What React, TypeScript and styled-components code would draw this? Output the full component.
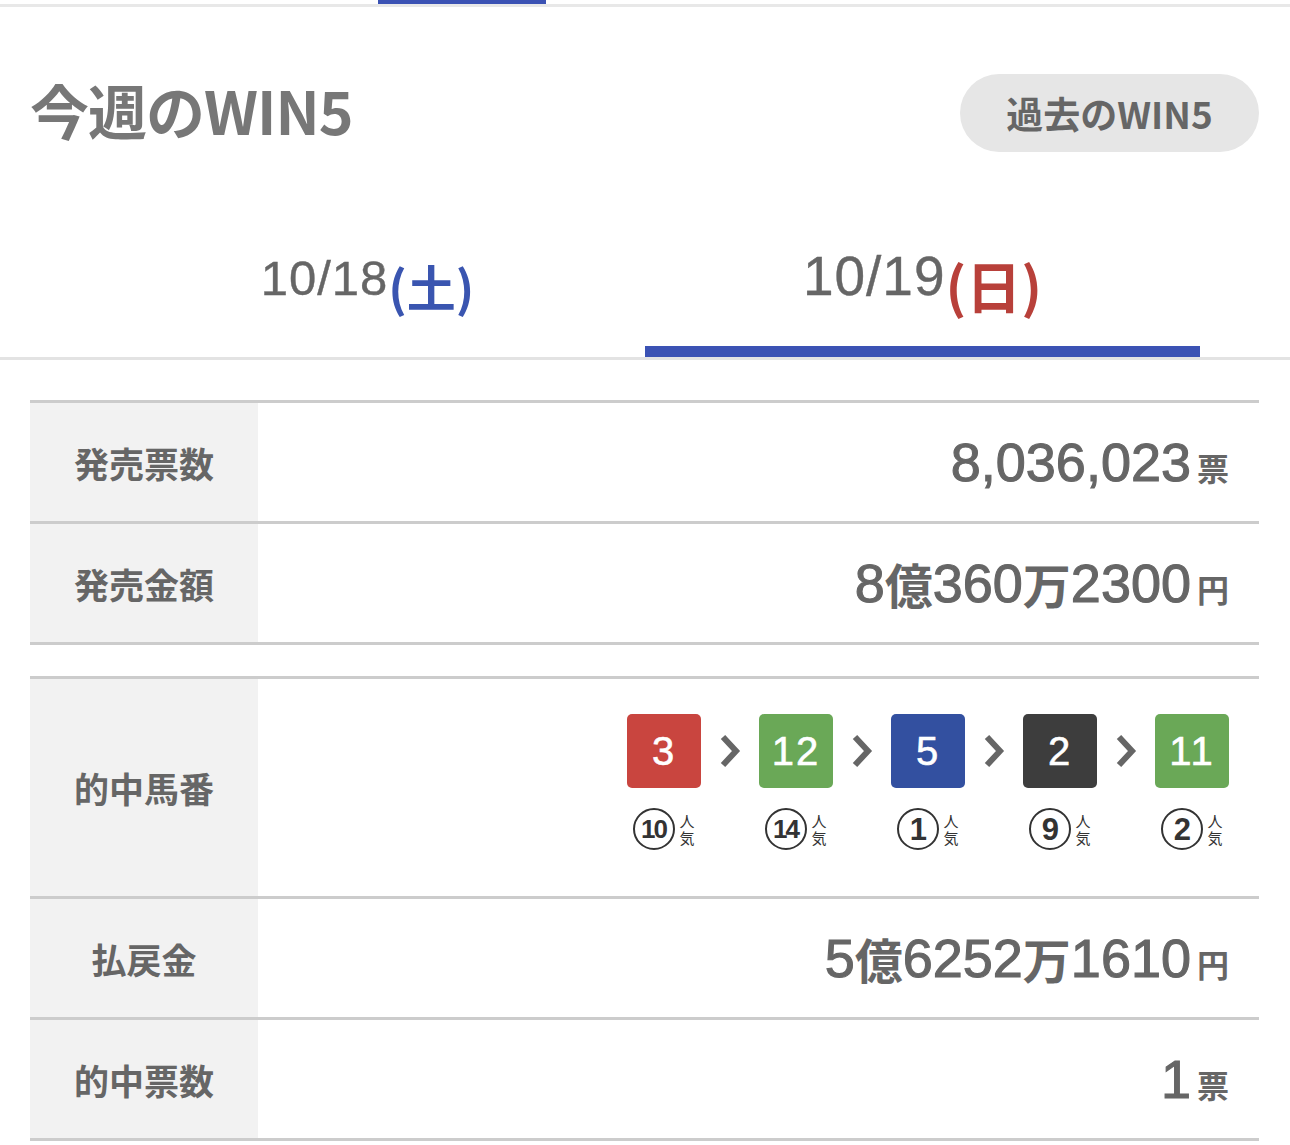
import React from "react"
import styled, { createGlobalStyle } from "styled-components"

const GlobalStyle = createGlobalStyle`
  html, body {
    margin: 0;
    padding: 0;
    background: #fff;
  }
  body {
    font-family: "Liberation Sans", "Noto Sans CJK JP", sans-serif;
    color: #666;
  }
`

const TopNav = styled.div`
  height: 4px;
  padding-left: 378px;
  border-bottom: 3px solid #e8e8e8;
`

const TopIndicator = styled.div`
  width: 168px;
  height: 4px;
  background: #3b52b4;
`

const Header = styled.header`
  display: flex;
  align-items: center;
  justify-content: space-between;
  margin-top: 67px;
  padding: 0 31px 0 30px;
`

const Title = styled.h1`
  margin: 0 0 6px;
  line-height: 72px;
  font-family: "Noto Sans CJK JP", sans-serif;
  font-size: 59px;
  font-weight: 700;
  color: #777;
  letter-spacing: -1px;
`

const PastButton = styled.button`
  width: 299px;
  height: 78px;
  border: none;
  border-radius: 39px;
  background: #e6e6e6;
  color: #666;
  font-family: "Noto Sans CJK JP", sans-serif;
  font-size: 37px;
  font-weight: 700;
  cursor: pointer;
`

const Tabs = styled.nav`
  display: flex;
  padding: 0 90px;
  margin-top: 90px;
  border-bottom: 3px solid #e3e3e3;
`

const Tab = styled.div<{ active?: boolean }>`
  flex: 1;
  height: 115px;
  display: flex;
  align-items: flex-start;
  justify-content: center;
  box-sizing: border-box;
  padding-top: ${p => (p.active ? "2px" : "8px")};
  border-bottom: 11px solid ${p => (p.active ? "#3b52b4" : "transparent")};
  font-size: ${p => (p.active ? "55px" : "49px")};
  letter-spacing: 1px;
  color: #666;
  -webkit-text-stroke: 0.4px #666;
`

const Day = styled.span<{ tone: "sat" | "sun" }>`
  font-family: "Noto Sans CJK JP", sans-serif;
  font-weight: 700;
  letter-spacing: 0;
  -webkit-text-stroke: 0;
  color: ${p => (p.tone === "sat" ? "#3a55b0" : "#b8403a")};
`

const Table = styled.section<{ gap: number }>`
  margin: ${p => p.gap}px 31px 0 30px;
  border-top: 3px solid #cccccc;
`

const Row = styled.div<{ tall?: boolean }>`
  display: grid;
  grid-template-columns: 228px 1fr;
  height: ${p => (p.tall ? "217px" : "118px")};
  border-bottom: 3px solid #cccccc;
`

const Label = styled.div`
  display: flex;
  align-items: center;
  justify-content: center;
  background: #f2f2f2;
  font-family: "Noto Sans CJK JP", sans-serif;
  font-size: 35px;
  font-weight: 700;
  color: #666;
`

const Value = styled.div`
  display: flex;
  align-items: center;
  justify-content: flex-end;
  padding-right: 30px;
  font-size: 54px;
  font-weight: 400;
  color: #666;
  -webkit-text-stroke: 1.1px #666;
`

const Unit = styled.span`
  font-family: "Noto Sans CJK JP", sans-serif;
  font-size: 32px;
  font-weight: 700;
  -webkit-text-stroke: 0;
  margin-left: 6px;
  margin-top: 10px;
`

const Kanji = styled.span`
  font-family: "Noto Sans CJK JP", sans-serif;
  font-size: 48px;
  font-weight: 700;
  -webkit-text-stroke: 0;
`

const Horses = styled.div`
  display: flex;
  align-items: flex-start;
  justify-content: flex-end;
  padding: 35px 30px 0 0;
`

const HorseItem = styled.div`
  display: flex;
  flex-direction: column;
  align-items: center;
  width: 74px;
`

const HorseBox = styled.div<{ bg: string }>`
  width: 74px;
  height: 74px;
  border-radius: 5px;
  background: ${p => p.bg};
  color: #fff;
  display: flex;
  align-items: center;
  justify-content: center;
  font-size: 40px;
  font-family: "Liberation Sans", sans-serif;
  letter-spacing: 2px;
  -webkit-text-stroke: 0.6px #fff;
`

const Chevron = styled.div`
  width: 58px;
  height: 74px;
  display: flex;
  align-items: center;
  justify-content: center;
`

const Popularity = styled.div`
  display: flex;
  align-items: center;
  margin-top: 20px;
  color: #333;
`

const Circled = styled.span<{ wide?: boolean }>`
  width: 38px;
  height: 38px;
  border: 2.5px solid #333;
  border-radius: 50%;
  display: flex;
  align-items: center;
  justify-content: center;
  font-family: "Liberation Sans Narrow", "Liberation Sans", sans-serif;
  font-weight: 700;
  font-size: ${p => (p.wide ? "26px" : "31px")};
  letter-spacing: ${p => (p.wide ? "-2px" : "0")};
  text-indent: ${p => (p.wide ? "-2px" : "0")};
  line-height: 1;
`

const Ninki = styled.span`
  display: flex;
  flex-direction: column;
  font-family: "Noto Sans CJK JP", sans-serif;
  font-size: 15px;
  line-height: 17px;
  margin-left: 4px;
`

const horses = [
  { no: 3, color: "#c9453f", pop: 10 },
  { no: 12, color: "#6aa857", pop: 14 },
  { no: 5, color: "#3350a0", pop: 1 },
  { no: 2, color: "#3d3d3d", pop: 9 },
  { no: 11, color: "#6aa857", pop: 2 },
]

const Arrow = () => (
  <Chevron>
    <svg width="22" height="34" viewBox="0 0 22 34">
      <polyline points="4,3 17,17 4,31" fill="none" stroke="#666" strokeWidth="6" strokeLinejoin="miter" />
    </svg>
  </Chevron>
)

export default function App() {
  return (
    <>
      <GlobalStyle />
      <TopNav>
        <TopIndicator />
      </TopNav>
      <Header>
        <Title>今週のWIN5</Title>
        <PastButton>過去のWIN5</PastButton>
      </Header>
      <Tabs>
        <Tab>
          10/18<Day tone="sat">(土)</Day>
        </Tab>
        <Tab active>
          10/19<Day tone="sun">(日)</Day>
        </Tab>
      </Tabs>

      <Table gap={40}>
        <Row>
          <Label>発売票数</Label>
          <Value>
            8,036,023<Unit>票</Unit>
          </Value>
        </Row>
        <Row>
          <Label>発売金額</Label>
          <Value>
            8<Kanji>億</Kanji>360<Kanji>万</Kanji>2300<Unit>円</Unit>
          </Value>
        </Row>
      </Table>

      <Table gap={31}>
        <Row tall>
          <Label>的中馬番</Label>
          <Horses>
            {horses.map((h, i) => (
              <React.Fragment key={h.no}>
                {i > 0 && <Arrow />}
                <HorseItem>
                  <HorseBox bg={h.color}>{h.no}</HorseBox>
                  <Popularity>
                    <Circled wide={h.pop >= 10}>{h.pop}</Circled>
                    <Ninki>
                      <span>人</span>
                      <span>気</span>
                    </Ninki>
                  </Popularity>
                </HorseItem>
              </React.Fragment>
            ))}
          </Horses>
        </Row>
        <Row>
          <Label>払戻金</Label>
          <Value>
            5<Kanji>億</Kanji>6252<Kanji>万</Kanji>1610<Unit>円</Unit>
          </Value>
        </Row>
        <Row>
          <Label>的中票数</Label>
          <Value>
            1<Unit>票</Unit>
          </Value>
        </Row>
      </Table>
    </>
  )
}
